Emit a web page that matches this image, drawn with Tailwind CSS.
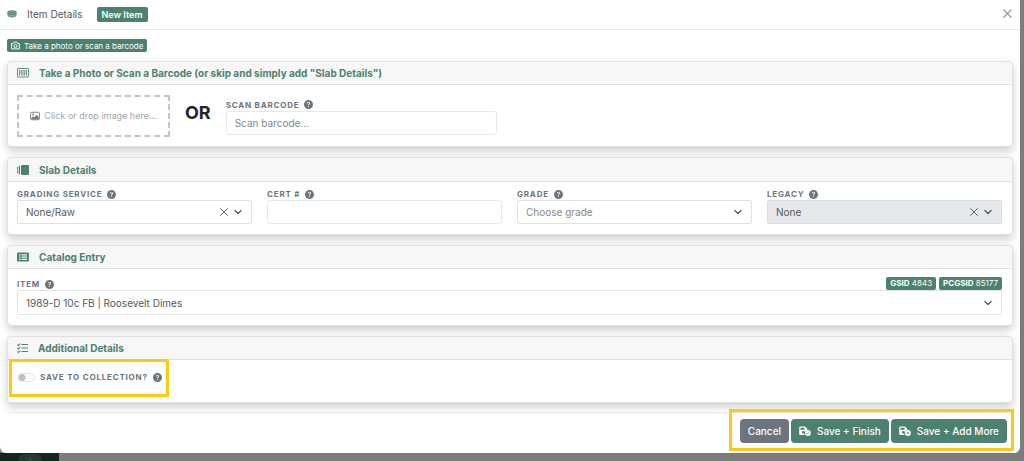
<!DOCTYPE html>
<html lang="en">
<head>
<meta charset="utf-8">
<meta name="viewport" content="width=device-width, initial-scale=1">
<title>Item Details</title>
<script src="https://cdn.jsdelivr.net/npm/@tailwindcss/browser@4"></script>
</head>
<body class="min-h-screen bg-[#7c7c7e] font-['Inter',sans-serif] text-[10px] leading-4 text-[#55595d]">
<svg class="hidden">
  <symbol id="help" viewBox="0 0 16 16"><path fill="currentColor" d="M16 8A8 8 0 1 1 0 8a8 8 0 0 1 16 0M5.496 6.033h.825c.138 0 .248-.113.266-.25.09-.656.54-1.134 1.342-1.134.686 0 1.314.343 1.314 1.168 0 .635-.374.927-.965 1.371-.673.489-1.206 1.06-1.168 1.987l.003.217a.25.25 0 0 0 .25.246h.811a.25.25 0 0 0 .25-.25v-.105c0-.718.273-.927 1.01-1.486.609-.463 1.244-.977 1.244-2.056 0-1.511-1.276-2.241-2.673-2.241-1.267 0-2.655.59-2.75 2.286a.237.237 0 0 0 .241.247m2.325 6.443c.61 0 1.029-.394 1.029-.927 0-.552-.42-.94-1.029-.94-.584 0-1.009.388-1.009.94 0 .533.425.927 1.01.927"/></symbol>
  <symbol id="chevron" viewBox="0 0 16 16"><path d="M3 5.500 8 10.500 13 5.500" fill="none" stroke="currentColor" stroke-width="2" stroke-linecap="round" stroke-linejoin="round"/></symbol>
  <symbol id="cross" viewBox="0 0 16 16"><path d="M2.500 2.500 13.500 13.500M13.500 2.500 2.500 13.500" fill="none" stroke="currentColor" stroke-width="1.500" stroke-linecap="round"/></symbol>
  <symbol id="floppy" viewBox="0 0 24 20"><path fill="currentColor" fill-rule="evenodd" d="M2.500 1H12l4.500 4.500V8a6.500 6.500 0 0 0-5.200 10H2.500A2 2 0 0 1 .5 16V3a2 2 0 0 1 2-2M3 3.500V7.500H11V3.500ZM8.500 10.200a2.500 2.500 0 1 0 0 5 2.500 2.500 0 0 0 0-5"/><circle cx="17.800" cy="14" r="5.800" fill="currentColor"/></symbol>
</svg>

<main role="dialog" aria-label="Item Details" class="mr-1 rounded-b-md bg-white">
  <header class="flex h-[30px] items-center border-b border-[#e6e8ea] pr-[7px] pl-[7px]">
    <svg class="mr-2.5 mb-0.5 h-2.5 w-2.5 text-[#4c8170]" viewBox="0 0 20 16"><path d="M1 5.500v5c0 6 18 6 18 0v-5Z" fill="currentColor" fill-opacity="0.6"/><ellipse cx="10" cy="5.500" rx="9.500" ry="5" fill="currentColor"/><ellipse cx="10" cy="5.500" rx="6.500" ry="2.500" fill="none" stroke="#fff" stroke-opacity="0.6" stroke-width="1.200"/><path d="M4 10.500v3M8 12v3M12 12v3M16 10.500v3" fill="none" stroke="currentColor" stroke-width="1.800"/></svg>
    <h1 class="mr-3.5 pb-0.5">Item Details</h1>
    <span class="rounded-[2px] bg-[#4c8170] px-[5px] text-[9px] leading-[15px] font-semibold text-white">New Item</span>
    <button aria-label="Close" class="ml-auto pb-0.5 text-[#808386]"><svg class="h-[11px] w-[11px]"><use href="#cross"/></svg></button>
  </header>

  <div class="px-[7px] pt-[9px]">
    <button class="flex h-[13px] items-center gap-1 rounded-[2px] bg-[#4c8170] px-1 text-[8px] leading-3 text-white"><svg class="h-[9px] w-[9px]" viewBox="0 0 16 16" fill="none" stroke="currentColor" stroke-width="1.700"><path d="M1 4.500h3L5.500 2h5L12 4.500h3v9.500H1Z"/><circle cx="8" cy="9" r="2.800"/></svg>Take a photo or scan a barcode</button>

    <section class="mt-[9px] mb-[10px] rounded-[4px] border border-[#dfe0e1] bg-white shadow-[0_4px_9px_rgba(0,0,0,0.2)]">
      <h2 class="flex h-[23px] items-center gap-2.5 rounded-t-[4px] border-b border-[#dfe0e1] bg-[#f7f7f7] px-[9px] font-bold text-[#4c8170]"><svg class="h-3 w-3" viewBox="0 0 24 24" fill="none" stroke="currentColor" stroke-width="1.700"><rect x="1" y="3" width="22" height="17" rx="1"/><path d="M5 6v11M8.500 6v11M12 6v11M15.500 6v11M19 6v11"/></svg>Take a Photo or Scan a Barcode (or skip and simply add "Slab Details")</h2>
      <div class="flex px-[9px] pt-2.5 pb-[9px]">
        <button class="flex h-[42px] w-[153px] items-center justify-center gap-1 border-2 border-dashed border-[#c4c4c4] text-[9px] text-[#a3a5a7]"><svg class="h-2.5 w-2.5 text-[#777a7d]" viewBox="0 0 16 16"><rect x="1" y="2" width="14" height="12" rx="1.500" fill="none" stroke="currentColor" stroke-width="1.500"/><circle cx="5" cy="5.500" r="1.500" fill="currentColor"/><path fill="currentColor" d="M2 13V11l3-2.500 2 1.500 3.500-4L14 9.500V13Z"/></svg>Click or drop image here...</button>
        <strong class="mx-[15px] pt-1.5 text-lg leading-6 font-bold text-[#212529]">OR</strong>
        <div class="w-[271px] pt-[3px]">
          <label for="scan" class="flex h-[13px] items-center gap-[5px] text-[8px] leading-3 font-bold tracking-widest text-[#6c757d]">SCAN BARCODE <svg class="h-[9px] w-[9px]"><use href="#help"/></svg></label>
          <input id="scan" placeholder="Scan barcode..." class="block h-6 w-full rounded-[3px] border border-[#e6e8ea] px-2 placeholder:text-[#85888b]">
        </div>
      </div>
    </section>

    <section class="mb-[10px] rounded-[4px] border border-[#dfe0e1] bg-white shadow-[0_4px_9px_rgba(0,0,0,0.2)]">
      <h2 class="flex h-6 items-center gap-2.5 rounded-t-[4px] border-b border-[#dfe0e1] bg-[#f7f7f7] px-[9px] font-bold text-[#4c8170]"><svg class="h-3 w-3" viewBox="0 0 24 24"><rect x="8" y="2" width="16" height="20" rx="2" fill="currentColor"/><path d="M1.500 5v14M5 3.500v17" stroke="currentColor" stroke-width="2"/></svg>Slab Details</h2>
      <div class="grid grid-cols-4 gap-x-[15px] pt-1.5 pr-2.5 pb-2.5 pl-[9px]">
        <div>
          <label for="service" class="flex h-3 items-center gap-[5px] text-[8px] leading-3 font-bold tracking-widest text-[#6c757d]">GRADING SERVICE <svg class="h-[9px] w-[9px]"><use href="#help"/></svg></label>
          <div class="flex h-6 items-center gap-1 rounded-[2px] border border-[#dee2e6] pr-2 text-[#55595d]">
            <select id="service" class="min-w-0 flex-1 appearance-none pl-2"><option>None/Raw</option></select>
            <button aria-label="Clear grading service"><svg class="h-2.5 w-2.5"><use href="#cross"/></svg></button>
            <svg class="h-2.5 w-2.5"><use href="#chevron"/></svg>
          </div>
        </div>
        <div>
          <label for="cert" class="flex h-3 items-center gap-[5px] text-[8px] leading-3 font-bold tracking-widest text-[#6c757d]">CERT # <svg class="h-[9px] w-[9px]"><use href="#help"/></svg></label>
          <input id="cert" class="block h-6 w-full rounded-[3px] border border-[#e6e8ea] px-2">
        </div>
        <div>
          <label for="grade" class="flex h-3 items-center gap-[5px] text-[8px] leading-3 font-bold tracking-widest text-[#6c757d]">GRADE <svg class="h-[9px] w-[9px]"><use href="#help"/></svg></label>
          <div class="flex h-6 items-center gap-1 rounded-[2px] border border-[#dee2e6] pr-2 text-[#55595d]">
            <select id="grade" class="min-w-0 flex-1 appearance-none pl-2 text-[#85888b]"><option>Choose grade</option></select>
            <svg class="h-2.5 w-2.5"><use href="#chevron"/></svg>
          </div>
        </div>
        <div>
          <label for="legacy" class="flex h-3 items-center gap-[5px] text-[8px] leading-3 font-bold tracking-widest text-[#6c757d]">LEGACY <svg class="h-[9px] w-[9px]"><use href="#help"/></svg></label>
          <div class="flex h-6 items-center gap-1 rounded-[2px] border border-[#d8dde1] bg-[#e6e9ec] pr-2 text-[#55595d]">
            <select id="legacy" class="min-w-0 flex-1 appearance-none pl-2"><option>None</option></select>
            <button aria-label="Clear legacy"><svg class="h-2.5 w-2.5"><use href="#cross"/></svg></button>
            <svg class="h-2.5 w-2.5"><use href="#chevron"/></svg>
          </div>
        </div>
      </div>
    </section>

    <section class="mb-[10px] rounded-[4px] border border-[#dfe0e1] bg-white shadow-[0_4px_9px_rgba(0,0,0,0.2)]">
      <h2 class="flex h-[23px] items-center gap-2.5 rounded-t-[4px] border-b border-[#dfe0e1] bg-[#f7f7f7] px-[9px] font-bold text-[#4c8170]"><svg class="h-3 w-3" viewBox="0 0 24 24"><path fill="currentColor" fill-rule="evenodd" d="M2 3h20a2 2 0 0 1 2 2v14a2 2 0 0 1-2 2H2a2 2 0 0 1-2-2V5a2 2 0 0 1 2-2M4 6.500v2.500h3V6.500ZM9 6.500v2.500h11V6.500ZM4 11v2.500h3V11ZM9 11v2.500h11V11ZM4 15.500V18h3v-2.500ZM9 15.500V18h11v-2.500Z"/></svg>Catalog Entry</h2>
      <div class="pt-2 pr-2.5 pb-2.5 pl-[9px]">
        <div class="flex items-start justify-end gap-[3px] text-[8px] leading-[13px] text-white">
          <label for="item" class="mr-auto flex items-center gap-[5px] pt-px leading-3 font-bold tracking-widest text-[#6c757d]">ITEM <svg class="h-[9px] w-[9px]"><use href="#help"/></svg></label>
          <span class="rounded-[2px] bg-[#4c8170] px-1"><b>GSID</b> 4843</span>
          <span class="rounded-[2px] bg-[#4c8170] px-1"><b>PCGSID</b> 85177</span>
        </div>
        <div class="flex h-[25px] items-center rounded-[2px] border border-[#dee2e6] pr-2 text-[#55595d]">
          <select id="item" class="min-w-0 flex-1 appearance-none pl-2"><option>1989-D 10c FB | Roosevelt Dimes</option></select>
          <svg class="h-2.5 w-2.5"><use href="#chevron"/></svg>
        </div>
      </div>
    </section>

    <section class="relative rounded-[4px] border border-[#dfe0e1] bg-white shadow-[0_4px_9px_rgba(0,0,0,0.2)]">
      <h2 class="flex h-[23px] items-center gap-[9px] rounded-t-[4px] border-b border-[#dfe0e1] bg-[#f7f7f7] px-[9px] font-bold text-[#4c8170]"><svg class="h-3 w-3" viewBox="0 0 24 24" fill="none" stroke="currentColor" stroke-width="2.200"><path d="M9 5h13M9 12h13M9 19h13M1 5l2 2 3.500-4M1 12l2 2 3.500-4M1 19l2 2 3.500-4"/></svg>Additional Details</h2>
      <div class="flex h-[42px] items-start pt-[11px] pl-[9px]">
        <label class="flex h-3 items-center gap-[5px] text-[8px] leading-3 font-bold tracking-widest text-[#6c757d]"><input type="checkbox" role="switch" class="h-[9px] w-[18px] appearance-none rounded-full border border-[#e3e5e7] bg-[radial-gradient(circle_at_4px_50%,#bfbfbf_3px,transparent_4px)]">SAVE TO COLLECTION? <svg class="h-[9px] w-[9px]"><use href="#help"/></svg></label>
      </div>
      <div class="pointer-events-none absolute top-[22px] left-[1px] h-[38px] w-[160px] border-3 border-[#ffc814]"></div>
    </section>
    <hr class="mt-[9px] border-[#ececec]">
  </div>

  <footer class="relative flex h-10 items-center justify-end gap-0.5 pr-[13px] pb-1 font-medium text-white">
    <button class="h-6 rounded-[4px] bg-[#6c757d] px-2">Cancel</button>
    <button class="flex h-6 items-center gap-1.5 rounded-[4px] bg-[#4c8170] px-2"><svg class="h-3 w-3" viewBox="0 0 24 20"><use href="#floppy"/><path d="m15 14 2 2 3.500-3.500" stroke="#4c8170" stroke-width="1.500" fill="none"/></svg>Save + Finish</button>
    <button class="flex h-6 items-center gap-1.5 rounded-[4px] bg-[#4c8170] px-2"><svg class="h-3 w-3" viewBox="0 0 24 20"><use href="#floppy"/><path d="M15 14h5.600M17.800 11.200v5.600" stroke="#4c8170" stroke-width="1.500" fill="none"/></svg>Save + Add More</button>
    <div class="pointer-events-none absolute -top-1 right-[6px] h-[42px] w-[285px] border-3 border-[#ffc814]"></div>
  </footer>
</main>
<div class="flex h-2 w-[59px] items-end justify-center overflow-hidden bg-[#14271f]">
  <div class="flex h-[7px] w-6 items-end justify-center rounded-t-full bg-[#263a32] text-[#65736d]"><svg class="h-1 w-1"><use href="#cross"/></svg></div>
</div>
</body>
</html>
